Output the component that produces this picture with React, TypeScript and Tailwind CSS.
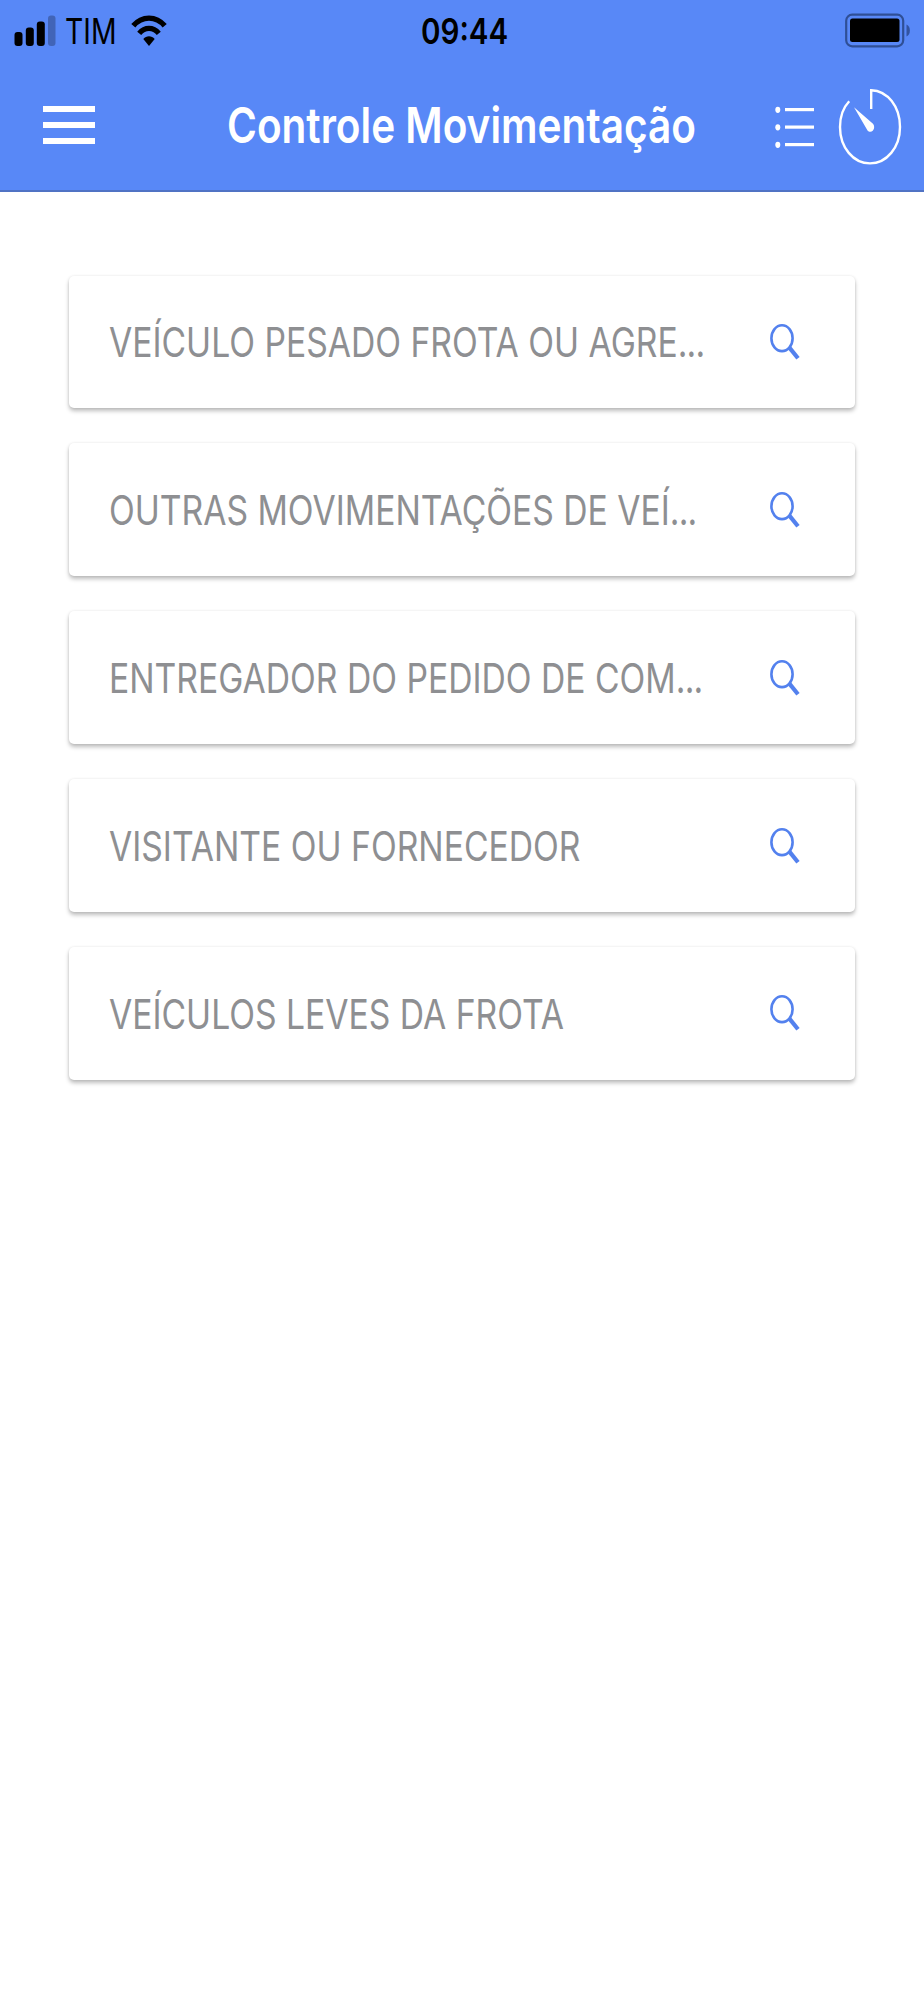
type Option = { label: string; truncated?: boolean };

const options: Option[] = [
  { label: "VEÍCULO PESADO FROTA OU AGRE", truncated: true },
  { label: "OUTRAS MOVIMENTAÇÕES DE VEÍ", truncated: true },
  { label: "ENTREGADOR DO PEDIDO DE COM", truncated: true },
  { label: "VISITANTE OU FORNECEDOR" },
  { label: "VEÍCULOS LEVES DA FROTA" },
];

function SignalIcon() {
  return (
    <svg className="h-8 w-[42px] shrink-0" viewBox="0 0 42 32">
      <rect x="0.5" y="17" width="8" height="14" rx="3" />
      <rect x="11.8" y="12.5" width="8" height="18.5" rx="3" />
      <rect x="22.8" y="6.5" width="8" height="24.5" rx="3" />
      <rect x="34" y="0.5" width="7.5" height="30.5" rx="3" opacity="0.26" />
    </svg>
  );
}

function WifiIcon() {
  return (
    <svg className="h-8 w-9 shrink-0" viewBox="0 0 36 32">
      <g fill="none" stroke="black">
        <path d="M2.3 10.8C11 0.6 25 0.6 33.7 10.8" strokeWidth="5.4" />
        <path d="M8.2 18.3C13.8 11.6 22.2 11.6 27.8 18.3" strokeWidth="5.2" />
      </g>
      <path d="M12.3 24C15.4 20.4 20.6 20.4 23.7 24L18 31Z" />
    </svg>
  );
}

function BatteryIcon() {
  return (
    <svg className="h-9 w-[66px] shrink-0" viewBox="0 0 66 36">
      <rect x="1.2" y="1.7" width="57" height="31.6" rx="6" fill="none" stroke="#2f4f96" strokeWidth="2.2" />
      <rect x="5" y="5.5" width="49.5" height="23.5" rx="2.5" />
      <path d="M61.5 11.5C66 13 66 22 61.5 23.5Z" fill="#3253a0" />
    </svg>
  );
}

function ListIcon() {
  return (
    <svg className="h-[44px] w-[40px] shrink-0" viewBox="0 0 40 44" fill="white">
      <ellipse cx="2.8" cy="4.8" rx="2.5" ry="3.1" />
      <ellipse cx="2.8" cy="22.3" rx="2.5" ry="3.1" />
      <ellipse cx="2.8" cy="39.8" rx="2.5" ry="3.1" />
      <rect x="10" y="3" width="29" height="3.2" />
      <rect x="10" y="20.5" width="29" height="3.2" />
      <rect x="10" y="38" width="29" height="3.2" />
    </svg>
  );
}

function TimerIcon() {
  return (
    <svg className="h-[78px] w-[64px] shrink-0" viewBox="0 0 64 78">
      <path
        d="M11.2 13.2C5.3 19.5 2 28.5 2 39C2 59.5 15.3 75.4 32 75.4S62 59.5 62 39C62 18.5 49.5 2.7 33.2 2.2V21"
        fill="none"
        stroke="white"
        strokeWidth="2.4"
      />
      <path d="M16 19.3L34.7 35.4A3.9 4.7 0 1 1 28.8 41.2Z" fill="white" />
    </svg>
  );
}

function SearchIcon() {
  return (
    <svg className="h-9 w-[31px] shrink-0" viewBox="0 0 31 36" fill="none" stroke="#5381ee">
      <ellipse cx="12" cy="14.2" rx="10.6" ry="12.9" strokeWidth="2.6" />
      <path d="M19.2 23.4L28 34.3" strokeWidth="4.2" />
    </svg>
  );
}

export default function App() {
  return (
    <div className="min-h-[2000px] w-full bg-white font-[Inter,'Liberation_Sans',sans-serif]">
      <header className="h-48 border-b-2 border-[#5073c4] bg-[#5888f7]">
        <div className="grid h-[62px] grid-cols-3 items-center pr-[13px] pl-[14px]">
          <div className="flex items-center">
            <SignalIcon />
            <span className="ml-[9px] w-[66px] origin-left scale-x-[0.81] text-[35px] leading-none">TIM</span>
            <WifiIcon />
          </div>
          <div className="flex justify-center pl-1">
            <span className="scale-x-[0.845] text-[35px] leading-none font-semibold">09:44</span>
          </div>
          <div className="flex justify-end">
            <BatteryIcon />
          </div>
        </div>
        <div className="grid h-[126px] grid-cols-[159px_minmax(0,1fr)_180px] items-center pr-[22px] pl-[43px]">
          <button aria-label="Menu" className="flex w-[52px] flex-col gap-[10px]">
            <span className="h-[6px] bg-white" />
            <span className="h-[6px] bg-white" />
            <span className="h-[6px] bg-white" />
          </button>
          <h1 className="flex justify-center text-[49px] leading-none font-semibold whitespace-nowrap text-white">
            <span className="scale-x-[0.827]">Controle Movimentação</span>
          </h1>
          <div className="flex items-center justify-end gap-[23px] pt-1">
            <ListIcon />
            <TimerIcon />
          </div>
        </div>
      </header>
      <main className="flex flex-col gap-[35.4px] px-[69px] pt-[83.6px]">
        {options.map((option) => (
          <button
            key={option.label}
            className="flex h-[132.5px] items-center justify-between rounded-[5px] bg-white pr-[54px] pl-[40px] text-left shadow-[0_3px_4px_rgba(0,0,0,0.26),0_0_3px_rgba(0,0,0,0.08)]"
          >
            <span className="w-0 origin-left scale-x-[0.821] pt-[2px] text-[41px] leading-none whitespace-nowrap text-[#8e8f92]">
              {option.label}
              {option.truncated && <span className="tracking-[-1px]">...</span>}
            </span>
            <SearchIcon />
          </button>
        ))}
      </main>
    </div>
  );
}
